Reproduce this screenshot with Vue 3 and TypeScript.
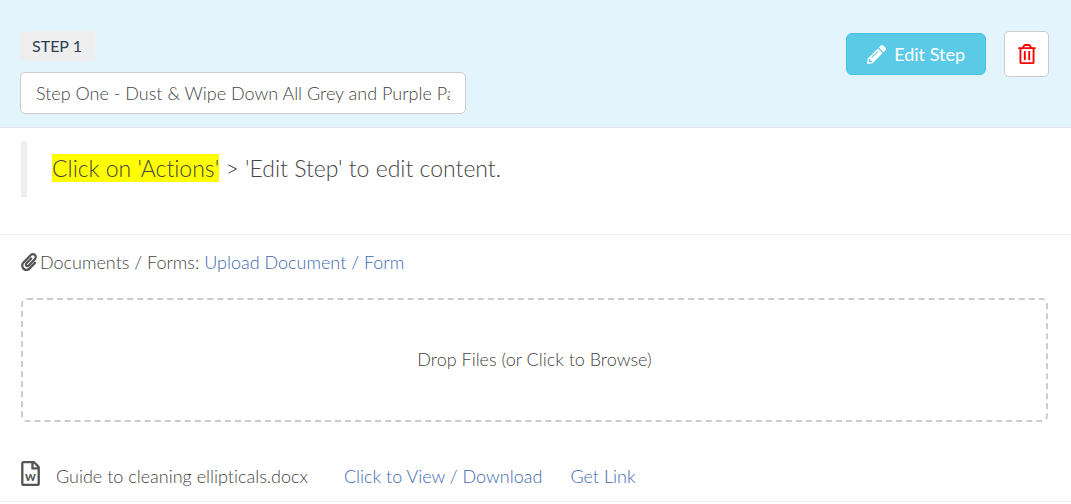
<script setup lang="ts">
import { ref } from 'vue'

interface StepFile {
  id: number
  name: string
}

const title = ref<string>('Step One - Dust & Wipe Down All Grey and Purple Pads')
const files = ref<StepFile[]>([{ id: 1, name: 'Guide to cleaning ellipticals.docx' }])
</script>

<template>
  <main class="step">
    <header class="step-header">
      <div class="step-heading">
        <label class="badge" for="step-title">STEP 1</label>
        <input id="step-title" v-model="title" class="title-input" type="text" />
      </div>
      <div class="actions">
        <button class="btn-edit" type="button">
          <svg class="icon-pencil" viewBox="0 0 512 512" aria-hidden="true">
            <path d="M497.9 142.1l-46.1 46.1c-4.7 4.7-12.3 4.7-17 0l-111-111c-4.7-4.7-4.7-12.3 0-17l46.1-46.1c18.7-18.7 49.1-18.7 67.9 0l60.1 60.1c18.8 18.7 18.8 49.1 0 67.9zM284.2 99.8L21.6 362.4.4 483.9c-2.9 16.4 11.4 30.6 27.8 27.8l121.5-21.3 262.6-262.6c4.7-4.7 4.7-12.3 0-17l-111-111c-4.8-4.7-12.4-4.7-17.1 0zM124.1 339.9c-5.5-5.5-5.5-14.3 0-19.8l154-154c5.5-5.5 14.3-5.5 19.8 0s5.5 14.3 0 19.8l-154 154c-5.5 5.5-14.3 5.5-19.8 0zM88 424h48v36.3l-64.5 11.3-31.1-31.1L51.8 376H88v48z" />
          </svg>
          <span>Edit Step</span>
        </button>
        <button class="btn-delete" type="button" aria-label="Delete step">
          <svg class="icon-trash" viewBox="0 0 448 512" aria-hidden="true">
            <path d="M268 416h24a12 12 0 0 0 12-12V188a12 12 0 0 0-12-12h-24a12 12 0 0 0-12 12v216a12 12 0 0 0 12 12zM432 80h-82.41l-34-56.7A48 48 0 0 0 274.41 0H173.59a48 48 0 0 0-41.16 23.3L98.41 80H16A16 16 0 0 0 0 96v16a16 16 0 0 0 16 16h16v336a48 48 0 0 0 48 48h288a48 48 0 0 0 48-48V128h16a16 16 0 0 0 16-16V96a16 16 0 0 0-16-16zM171.84 50.91A6 6 0 0 1 177 48h94a6 6 0 0 1 5.15 2.91L293.61 80H154.39zM368 464H80V128h288zm-212-48h24a12 12 0 0 0 12-12V188a12 12 0 0 0-12-12h-24a12 12 0 0 0-12 12v216a12 12 0 0 0 12 12z" />
          </svg>
        </button>
      </div>
    </header>

    <section class="content">
      <blockquote class="note"><mark>Click on 'Actions'</mark> &gt; 'Edit Step' to edit content.</blockquote>
    </section>

    <section class="documents">
      <p class="documents-title">
        <svg class="icon-clip" viewBox="0 0 448 512" aria-hidden="true">
          <path d="M43.246 466.142c-58.43-60.289-57.341-157.511 1.386-217.581L254.392 34c44.316-45.332 116.351-45.336 160.671 0 43.89 44.894 43.943 117.329 0 162.276L232.214 383.128c-29.855 30.537-78.633 30.111-107.982-.998-28.275-29.97-27.368-77.473 1.452-106.953l143.743-146.835c6.182-6.314 16.312-6.422 22.626-.241l22.861 22.379c6.315 6.182 6.422 16.312.241 22.626L171.427 319.927c-4.932 5.045-5.236 13.428-.648 18.292 4.372 4.634 11.245 4.711 15.688.165l182.849-186.851c19.613-20.062 19.613-52.725-.011-72.798-19.189-19.627-49.957-19.637-69.154 0L90.39 293.295c-34.763 35.56-35.299 93.12-1.191 128.313 34.01 35.093 88.985 35.137 123.058.286l172.06-175.999c6.177-6.319 16.307-6.433 22.626-.256l22.877 22.364c6.319 6.177 6.434 16.307.256 22.626l-172.06 175.998c-59.576 60.938-155.943 60.216-214.77-.485z" />
        </svg>
        <span>Documents / Forms: <a href="#upload">Upload Document / Form</a></span>
      </p>
      <button class="dropzone" type="button">Drop Files (or Click to Browse)</button>
      <ul class="files">
        <li v-for="file in files" :key="file.id" class="file">
          <svg class="icon-word" viewBox="0 0 384 512" aria-hidden="true">
            <path d="M369.9 97.9L286 14C277 5 264.8-.1 252.1-.1H48C21.5 0 0 21.5 0 48v416c0 26.5 21.5 48 48 48h288c26.5 0 48-21.5 48-48V131.9c0-12.7-5.1-25-14.1-34zM332.1 128H256V51.9l76.1 76.1zM48 464V48h160v104c0 13.3 10.7 24 24 24h104v288H48z" />
            <text x="192" y="408" text-anchor="middle">W</text>
          </svg>
          <span class="file-name">{{ file.name }}</span>
          <span class="file-links">
            <a href="#view">Click to View / Download</a>
            <a href="#link">Get Link</a>
          </span>
        </li>
      </ul>
    </section>
  </main>
</template>

<style>
body {
  margin: 0;
  background: #fff;
}
</style>

<style scoped>
.step {
  font-family: Lato, "Open Sans", sans-serif;
  font-size: 18px;
  font-weight: 300;
  font-variant-ligatures: none;
  line-height: 26px;
  color: #444;
}

.step-header {
  display: flex;
  justify-content: space-between;
  align-items: flex-start;
  padding: 31px 22px 13px 20px;
  background: #e3f4fc;
  border-bottom: 1px solid #dde5ea;
}

.step-heading {
  display: flex;
  flex-direction: column;
  align-items: flex-start;
  gap: 11px;
  flex: 0 1 446px;
}

.badge {
  padding: 2px 13px 2px 12px;
  border-radius: 4px;
  background: #eee;
  color: #2c3e50;
  font-size: 16px;
  font-weight: 400;
}

.title-input {
  box-sizing: border-box;
  width: 100%;
  height: 42px;
  padding: 0 15px;
  border: 1px solid #ccc;
  border-radius: 5px;
  background: #fff;
  color: #444;
  font: inherit;
}

.actions {
  display: flex;
  align-items: center;
  gap: 18px;
}

.btn-edit,
.btn-delete {
  display: flex;
  align-items: center;
  justify-content: center;
  padding: 0;
  font: inherit;
  cursor: pointer;
}

.btn-edit {
  gap: 8px;
  height: 42px;
  padding: 0 20px;
  border: 1px solid #46c3e4;
  border-radius: 6px;
  background: #5bcae7;
  color: #fff;
  font-weight: 400;
}

.btn-delete {
  width: 45px;
  height: 46px;
  border: 1px solid #ccc;
  border-radius: 5px;
  background: #fff;
  color: #f00;
}

svg {
  flex: none;
  fill: currentColor;
}

.icon-pencil {
  width: 19px;
  height: 19px;
}

.icon-trash {
  width: 18px;
  height: 20px;
}

.content {
  padding: 13px 21px 37px;
  border-bottom: 1px solid #eee;
}

.note {
  margin: 0;
  padding: 13px 25px 15px;
  border-left: 6px solid #eee;
  font-size: 23px;
  line-height: 28px;
}

.note mark {
  background: #ff0;
  color: inherit;
}

.documents {
  padding: 14px 23px 0 21px;
}

.documents-title {
  display: flex;
  align-items: center;
  gap: 3px;
  margin: 0 0 23px;
}

.icon-clip {
  width: 16px;
  height: 18px;
  color: #555;
}

a {
  color: #4068b0;
  text-decoration: none;
}

.dropzone {
  display: block;
  box-sizing: border-box;
  width: 100%;
  padding: 46px 20px 48px;
  border: 2px dashed #ccc;
  border-radius: 6px;
  background: #fff;
  color: inherit;
  font: inherit;
  cursor: pointer;
}

.files {
  margin: 39px -23px 0 -21px;
  padding: 0;
  list-style: none;
}

.file {
  display: flex;
  align-items: flex-end;
  padding: 0 21px 12px;
  border-bottom: 1px solid #eee;
}

.file-name {
  margin: 0 36px 0 16px;
}

.file-links {
  display: flex;
  gap: 28px;
}

.icon-word {
  width: 19px;
  height: 25px;
  margin-bottom: 3px;
  color: #555;
}

.icon-word text {
  font-family: Lato, sans-serif;
  font-size: 210px;
  font-weight: 900;
}
</style>
